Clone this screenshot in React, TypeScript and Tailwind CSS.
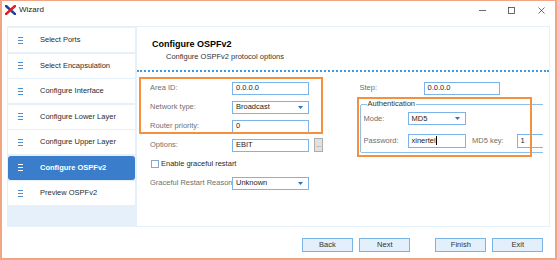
import { FC, ReactNode } from "react";

const steps = [
  "Select Ports",
  "Select Encapsulation",
  "Configure Interface",
  "Configure Lower Layer",
  "Configure Upper Layer",
  "Configure OSPFv2",
  "Preview OSPFv2",
];
const ACTIVE = 5;

const Logo: FC = () => (
  <svg width="11" height="10" viewBox="0 0 11 10">
    <path d="M1 1L10 9" stroke="#1f3f9a" strokeWidth="2.6" strokeLinecap="square" />
    <path d="M10 1L1 9" stroke="#e02020" strokeWidth="2.6" strokeLinecap="square" />
  </svg>
);

const MenuIcon: FC<{ active?: boolean }> = ({ active }) => (
  <svg
    width="5"
    height="7"
    viewBox="0 0 5 7"
    className={active ? "text-white" : "text-[#4f8fd6]"}
  >
    <path d="M0 0.5H5M0 3.5H5M0 6.5H5" stroke="currentColor" strokeWidth="1" />
  </svg>
);

const Arrow: FC = () => (
  <svg width="5" height="3" viewBox="0 0 5 3">
    <path d="M0 0H5L2.5 3Z" fill="#2f6fbd" />
  </svg>
);

const Box: FC<{ className: string; children?: ReactNode; arrow?: boolean }> = ({
  className,
  children,
  arrow,
}) => (
  <div
    className={`flex shrink-0 items-center justify-between border border-[#7ab4e8] bg-white pl-[3px] pr-[5px] text-[#1e1e1e] ${className}`}
  >
    <span className="flex items-center whitespace-nowrap">{children}</span>
    {arrow && <Arrow />}
  </div>
);

const Label: FC<{ className: string; children: ReactNode }> = ({ className, children }) => (
  <span className={`shrink-0 overflow-hidden whitespace-nowrap text-[#6f6f6f] ${className}`}>
    {children}
  </span>
);

const WizardButton: FC<{ children: ReactNode; className?: string }> = ({ children, className }) => (
  <button
    className={`flex h-[13.5px] w-[51px] items-center justify-center border border-[#7ab3e6] bg-[#e3effa] text-[#333] ${className ?? ""}`}
  >
    {children}
  </button>
);

export default function App() {
  return (
    <div className="flex h-[260px] w-[557px] flex-col border-x-2 border-b-2 border-t border-[#f2a585] bg-white font-['Liberation_Sans',Arial,sans-serif] text-[7.5px] leading-[10px] text-[#2b2b2b]">
      {/* title bar */}
      <div className="h-[25px] shrink-0">
        <div className="flex h-[18px] items-center pl-[3px]">
          <Logo />
          <span className="ml-[3px] text-[8px] text-[#222]">Wizard</span>
          <svg width="7" height="7" viewBox="0 0 7 7" className="ml-auto">
            <path d="M0 3.5H7" stroke="#444" strokeWidth="0.8" />
          </svg>
          <svg width="7" height="7" viewBox="0 0 7 7" className="ml-[22px]">
            <rect x="0.5" y="0.5" width="6" height="6" fill="none" stroke="#444" strokeWidth="0.8" />
          </svg>
          <svg width="7" height="7" viewBox="0 0 7 7" className="ml-[23px] mr-[10px]">
            <path d="M0.5 0.5L6.5 6.5M6.5 0.5L0.5 6.5" stroke="#444" strokeWidth="0.8" />
          </svg>
        </div>
      </div>

      {/* body frame */}
      <div className="mx-[5px] flex h-[201px] shrink-0 gap-[2px] bg-[#e6f0fa] p-[1px]">
        <div className="flex w-[127px] shrink-0 flex-col gap-[1.5px] pt-[1.3px]">
          {steps.map((s, i) =>
            i === ACTIVE ? (
              <div
                key={s}
                className="flex h-[24px] items-center rounded-[3px] bg-[#3a7ecb] pl-[10px] font-bold text-white"
              >
                <MenuIcon active />
                <span className="ml-[17px]">{s}</span>
              </div>
            ) : (
              <div key={s} className="flex h-[24px] items-center bg-white pl-[10px]">
                <MenuIcon />
                <span className="ml-[17px]">{s}</span>
              </div>
            )
          )}
        </div>

        <div className="flex flex-1 flex-col bg-white">
          <div className="pl-[15px] pt-[11px] text-[9px] font-bold leading-[12px] text-black">
            Configure OSPFv2
          </div>
          <div className="mt-[2px] pl-[29px] text-[#333]">Configure OSPFv2 protocol options</div>
          <div className="mt-[8px] border-t-2 border-dotted border-[#3f9be0]" />

          <div className="relative flex pl-[13px] pt-[6.5px]">
            <div className="flex w-[173px] shrink-0 flex-col">
              <div className="flex h-[19px] items-center">
                <Label className="w-[82px]">Area ID:</Label>
                <Box className="h-[13px] w-[77px]">0.0.0.0</Box>
              </div>
              <div className="flex h-[19px] items-center">
                <Label className="w-[82px]">Network type:</Label>
                <Box className="h-[13px] w-[77px]" arrow>
                  Broadcast
                </Box>
              </div>
              <div className="flex h-[19px] items-center">
                <Label className="w-[82px]">Router priority:</Label>
                <Box className="h-[13px] w-[77px]">0</Box>
              </div>
              <div className="flex h-[19px] items-center">
                <Label className="w-[82px]">Options:</Label>
                <Box className="h-[13px] w-[77px]">EBIT</Box>
                <div className="ml-[5px] flex h-[13.5px] w-[9.5px] items-center justify-center border border-[#adadad] bg-[#e1e1e1] text-[6px] leading-none text-[#333]">
                  ...
                </div>
              </div>
              <div className="flex h-[19px] items-center">
                <span className="ml-[1px] h-[7.5px] w-[7.5px] shrink-0 border border-[#8aa9c9] bg-white" />
                <span className="ml-[2.5px] text-[#2b2b2b]">Enable graceful restart</span>
              </div>
              <div className="flex h-[19px] items-center">
                <Label className="w-[82px]">Graceful Restart Reason:</Label>
                <Box className="h-[13px] w-[77px]" arrow>
                  Unknown
                </Box>
              </div>
            </div>

            <div className="ml-[36.5px] flex w-[183.5px] shrink-0 flex-col overflow-hidden">
              <div className="flex h-[19px] items-center">
                <Label className="w-[64px]">Step:</Label>
                <Box className="h-[13px] w-[76px]">0.0.0.0</Box>
              </div>
              <fieldset className="mt-[1.5px] w-[200px] shrink-0 rounded-[2px] border border-[#8fc0ea] pb-[2px] pl-[3px]">
                <legend className="ml-[3px] px-[1px] leading-[10px] text-[#333]">Authentication</legend>
                <div className="flex flex-col gap-[3px]">
                  <div className="flex h-[19px] items-center">
                    <Label className="w-[44px]">Mode:</Label>
                    <Box className="h-[13px] w-[58px]" arrow>
                      MD5
                    </Box>
                  </div>
                  <div className="flex h-[19px] items-center">
                    <Label className="w-[44px]">Password:</Label>
                    <Box className="h-[14px] w-[58px]">
                      xinertel
                      <span className="ml-[0.5px] h-[9px] w-[1px] bg-black" />
                    </Box>
                    <Label className="ml-[6.5px] w-[44.5px]">MD5 key:</Label>
                    <Box className="h-[14px] w-[40px]">1</Box>
                  </div>
                </div>
              </fieldset>
            </div>

            {/* highlight annotations */}
            <div className="pointer-events-none absolute left-[2px] top-[5.3px] h-[57px] w-[184px] border-2 border-[#f5913c]" />
            <div className="pointer-events-none absolute left-[219.7px] top-[24.7px] h-[60.6px] w-[175px] border-2 border-[#f5913c]" />
          </div>
        </div>
      </div>

      {/* buttons */}
      <div className="flex flex-1 items-start justify-end pr-[11.7px] pt-[11.3px]">
        <WizardButton>Back</WizardButton>
        <WizardButton className="ml-[6.5px]">Next</WizardButton>
        <WizardButton className="ml-[25px]">Finish</WizardButton>
        <WizardButton className="ml-[6px]">Exit</WizardButton>
      </div>
    </div>
  );
}
